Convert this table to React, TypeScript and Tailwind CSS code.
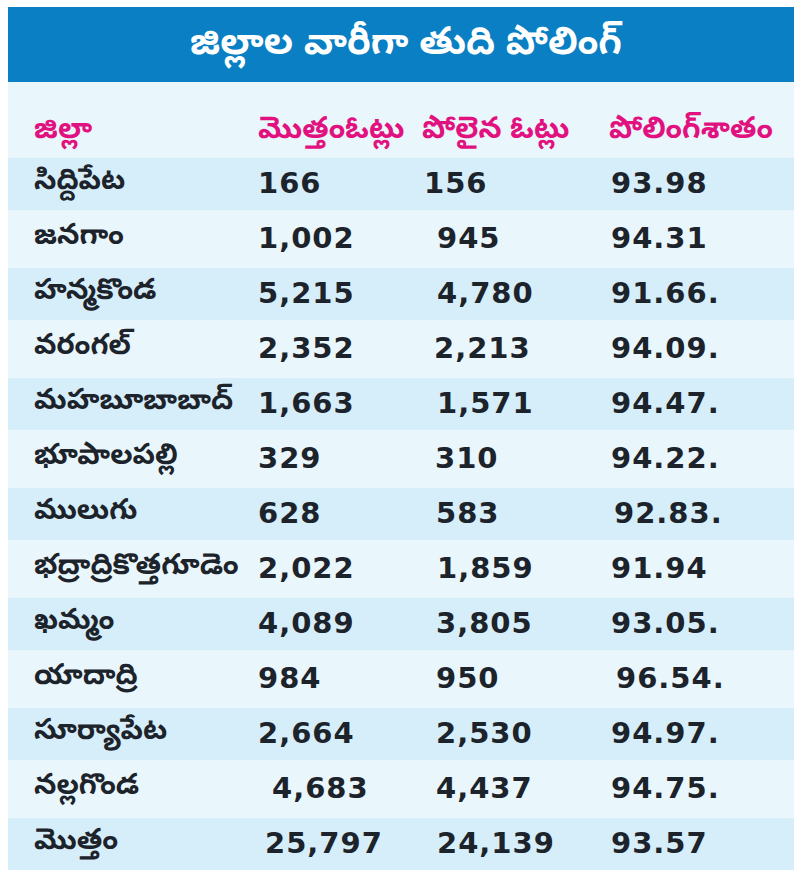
const telugu = "font-['Noto_Sans_Telugu','Lohit_Telugu','Gurajada','Noto_Sans',sans-serif]";
const nums = "font-['DejaVu_Sans',Verdana,sans-serif] font-bold text-[29px] tracking-[1px]";

type Row = {
  name: string;
  total: string;
  polled: string;
  pct: string;
  tPad?: string;
  pPad?: string;
  cPad?: string;
};

const rows: Row[] = [
  { name: "సిద్దిపేట", total: "166", polled: "156", pct: "93.98" },
  { name: "జనగాం", total: "1,002", polled: "945", pct: "94.31", pPad: "pl-[13px]" },
  { name: "హన్మకొండ", total: "5,215", polled: "4,780", pct: "91.66.", pPad: "pl-[13px]" },
  { name: "వరంగల్", total: "2,352", polled: "2,213", pct: "94.09.", pPad: "pl-[10px]" },
  { name: "మహబూబాబాద్", total: "1,663", polled: "1,571", pct: "94.47.", pPad: "pl-[13px]" },
  { name: "భూపాలపల్లి", total: "329", polled: "310", pct: "94.22.", pPad: "pl-[11px]" },
  { name: "ములుగు", total: "628", polled: "583", pct: "92.83.", pPad: "pl-[12px]", cPad: "pl-[3px]" },
  { name: "భద్రాద్రికొత్తగూడెం", total: "2,022", polled: "1,859", pct: "91.94", pPad: "pl-[13px]" },
  { name: "ఖమ్మం", total: "4,089", polled: "3,805", pct: "93.05.", pPad: "pl-[12px]" },
  { name: "యాదాద్రి", total: "984", polled: "950", pct: "96.54.", pPad: "pl-[12px]", cPad: "pl-[5px]" },
  { name: "సూర్యాపేట", total: "2,664", polled: "2,530", pct: "94.97.", pPad: "pl-[12px]" },
  { name: "నల్లగొండ", total: "4,683", polled: "4,437", pct: "94.75.", tPad: "pl-[14px]", pPad: "pl-[12px]" },
  { name: "మొత్తం", total: "25,797", polled: "24,139", pct: "93.57", tPad: "pl-[7px]", pPad: "pl-[13px]" },
];

const App = () => {
  return (
    <div className="w-[797px] h-[887px] bg-white pt-[7px] pl-[8px]">
      <div className="w-[786px]">
        <div className="h-[75px] bg-[#0a7fc3] flex items-center justify-center pt-[4px]">
          <h1 className={`${telugu} text-white font-bold text-[38px] leading-none pl-[10px]`}>
            జిల్లాల వారీగా తుది పోలింగ్
          </h1>
        </div>

        <div className="h-[76px] bg-[#e9f6fc] grid grid-cols-[250px_166px_187px_1fr] items-center pt-[24px] text-[#e1127f] text-[30px] font-bold">
          <div className={`${telugu} pl-[26px]`}>జిల్లా</div>
          <div className={telugu}>మొత్తంఓట్లు</div>
          <div className={`${telugu} -ml-[2px]`}>పోలైన ఓట్లు</div>
          <div className={`${telugu} -ml-[2px]`}>పోలింగ్‌శాతం</div>
        </div>

        {rows.map((r, i) => (
          <div
            key={r.name}
            className={`grid grid-cols-[250px_166px_187px_1fr] items-center text-[#1d232b] ${
              i % 2 === 0 ? "h-[52px] bg-[#d5eefa]" : "h-[58px] bg-[#e9f6fc]"
            }`}
          >
            <div className={`${telugu} pl-[26px] text-[29px] font-bold whitespace-nowrap`}>{r.name}</div>
            <div className={`${nums} ${r.tPad ?? ""}`}>{r.total}</div>
            <div className={`${nums} ${r.pPad ?? ""}`}>{r.polled}</div>
            <div className={`${nums} ${r.cPad ?? ""}`}>{r.pct}</div>
          </div>
        ))}
      </div>
    </div>
  );
};

export default App;
